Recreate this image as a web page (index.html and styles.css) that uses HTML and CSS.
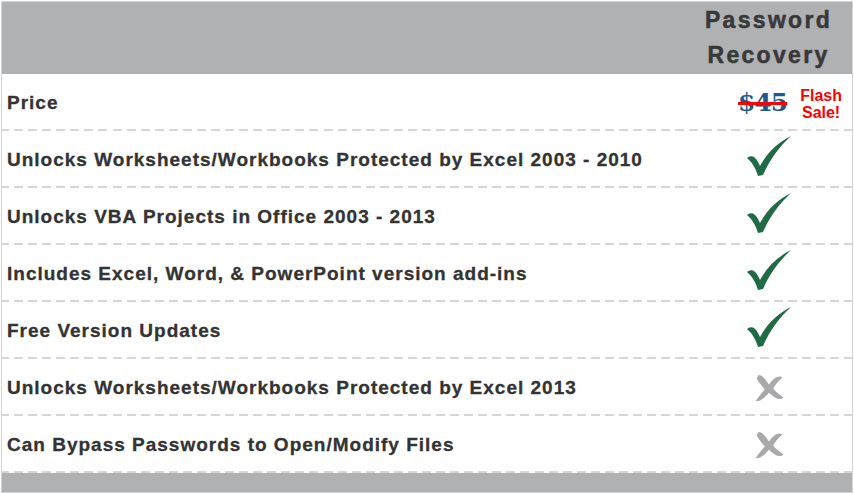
FILE: index.html
```html
<!DOCTYPE html>
<html>
<head>
<meta charset="utf-8">
<link rel="stylesheet" href="styles.css">
</head>
<body>
<div class="table">
  <div class="row head">
    <div class="label"></div>
    <div class="col">Password<br>Recovery</div>
  </div>
  <div class="row">
    <div class="label">Price</div>
    <div class="col price"><span class="old">$45</span><span class="sale">Flash<br>Sale!</span></div>
  </div>
  <div class="row">
    <div class="label">Unlocks Worksheets/Workbooks Protected by Excel 2003 - 2010</div>
    <div class="col"><svg class="check" viewBox="0 0 46 42"><path d="M1 23 C5 20 9 21 12 27 L14 31 C21 18 31 8 45 1 C34 11 24 24 17 40 L12 41 C10 34 6 27 1 23 Z"/></svg></div>
  </div>
  <div class="row">
    <div class="label">Unlocks VBA Projects in Office 2003 - 2013</div>
    <div class="col"><svg class="check" viewBox="0 0 46 42"><path d="M1 23 C5 20 9 21 12 27 L14 31 C21 18 31 8 45 1 C34 11 24 24 17 40 L12 41 C10 34 6 27 1 23 Z"/></svg></div>
  </div>
  <div class="row">
    <div class="label">Includes Excel, Word, &amp; PowerPoint version add-ins</div>
    <div class="col"><svg class="check" viewBox="0 0 46 42"><path d="M1 23 C5 20 9 21 12 27 L14 31 C21 18 31 8 45 1 C34 11 24 24 17 40 L12 41 C10 34 6 27 1 23 Z"/></svg></div>
  </div>
  <div class="row">
    <div class="label">Free Version Updates</div>
    <div class="col"><svg class="check" viewBox="0 0 46 42"><path d="M1 23 C5 20 9 21 12 27 L14 31 C21 18 31 8 45 1 C34 11 24 24 17 40 L12 41 C10 34 6 27 1 23 Z"/></svg></div>
  </div>
  <div class="row">
    <div class="label">Unlocks Worksheets/Workbooks Protected by Excel 2013</div>
    <div class="col"><svg class="cross" viewBox="0 0 30 30"><path d="M5 3 C9 3 12 8 15 12 C19 7 23 3 28 5 C25 8 21 12 19 16 C22 20 26 22 29 25 C25 28 20 25 15 20 C11 24 7 29 2 28 C5 24 8 20 11 17 C8 13 5 10 3 6 Z"/></svg></div>
  </div>
  <div class="row">
    <div class="label">Can Bypass Passwords to Open/Modify Files</div>
    <div class="col"><svg class="cross" viewBox="0 0 30 30"><path d="M5 3 C9 3 12 8 15 12 C19 7 23 3 28 5 C25 8 21 12 19 16 C22 20 26 22 29 25 C25 28 20 25 15 20 C11 24 7 29 2 28 C5 24 8 20 11 17 C8 13 5 10 3 6 Z"/></svg></div>
  </div>
  <div class="foot"></div>
</div>
</body>
</html>
```

FILE: styles.css
```css
html, body {
  margin: 0;
  padding: 0;
  background: #fff;
}
body {
  padding: 1px;
  font-family: "Liberation Sans", Arial, sans-serif;
}
.table {
  width: 850px;
  border: 1px solid #d2d3d5;
  display: flex;
  flex-direction: column;
}
.row {
  display: flex;
  height: 55px;
  align-items: center;
  border-bottom: 2px solid transparent;
  border-image: repeating-linear-gradient(90deg, #d6d6d6 0 9px, transparent 9px 14px) 2;
}
.row.head {
  height: 72px;
  background: #b0b1b3;
  border: none;
}
.label {
  flex: 1;
  padding-left: 5px;
  padding-top: 3px;
  font-weight: bold;
  font-size: 19px;
  letter-spacing: 1px;
  color: #333;
  -webkit-text-stroke: 0.3px #333;
}
.col {
  width: 168px;
  display: flex;
  align-items: center;
  justify-content: center;
  font-weight: bold;
  font-size: 23px;
  letter-spacing: 2.3px;
  line-height: 35px;
  color: #383838;
  -webkit-text-stroke: 0.5px #383838;
  text-align: center;
  padding-left: 1px;
  box-sizing: border-box;
}
.price {
  gap: 13px;
  padding-left: 44px;
  letter-spacing: 0;
  -webkit-text-stroke: 0;
}
.old {
  font-family: "DejaVu Serif", serif;
  font-weight: bold;
  font-size: 25px;
  color: #1d5b8e;
  text-decoration: line-through;
  text-decoration-color: #f00;
  text-decoration-thickness: 3px;
  letter-spacing: -1px;
  margin-top: 2px;
}
.sale {
  font-size: 16px;
  line-height: 17px;
  color: #f00;
  text-align: center;
  margin-top: 4px;
}
.check {
  width: 46px;
  height: 42px;
  fill: #1f6b45;
  margin-top: -6px;
}
.cross {
  width: 32px;
  height: 31px;
  fill: #a9a9ab;
  margin-top: 2px;
}
.foot {
  height: 19px;
  background: #b0b1b3;
}
```
